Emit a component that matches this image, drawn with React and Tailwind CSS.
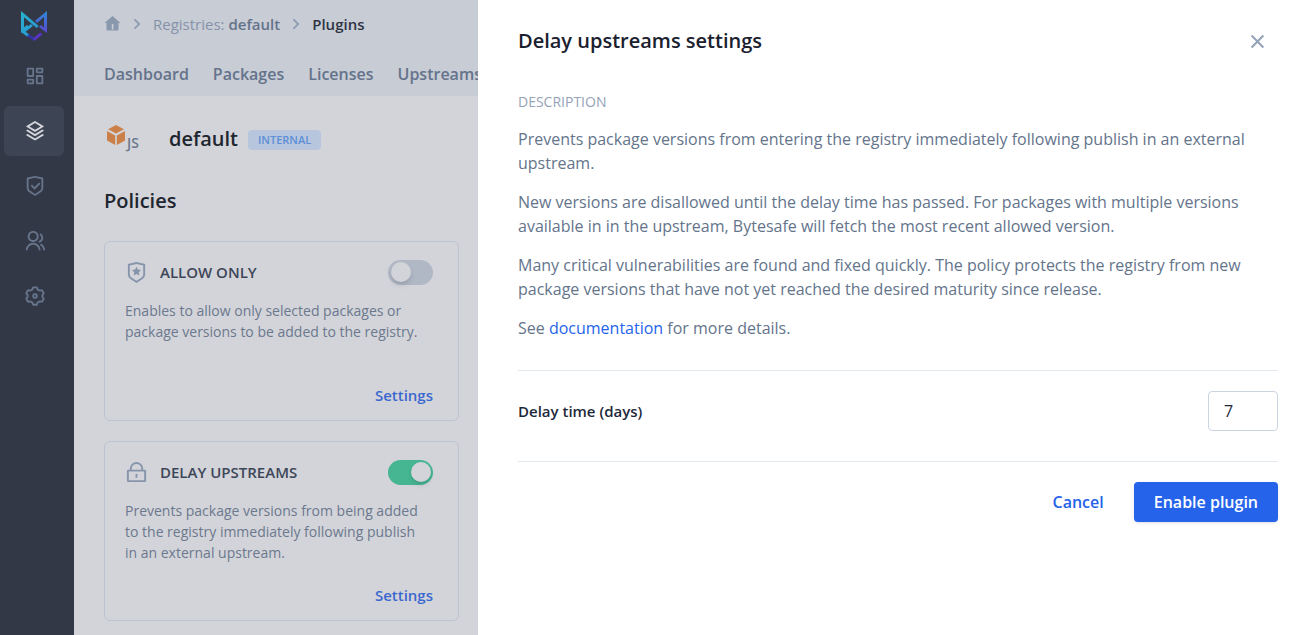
import React, { useState } from 'react';
import {
  RiDashboardLine,
  RiStackLine,
  RiShieldCheckLine,
  RiGroupLine,
  RiShieldStarLine,
  RiCloseLine,
  RiArrowRightSLine,
} from 'react-icons/ri';

const tabs = ['Dashboard', 'Packages', 'Licenses', 'Upstreams'];

function GearIcon({ className }) {
  return (
    <svg className={className} viewBox="0 0 24 24" fill="none" stroke="currentColor" strokeWidth="2" strokeLinejoin="round">
      <path d="M9.2 4.8L10 2.5H14L14.8 4.8L17.2 6.2L19.6 5.7L21.6 9.2L20 11V13L21.6 14.8L19.6 18.3L17.2 17.8L14.8 19.2L14 21.5H10L9.2 19.2L6.8 17.8L4.4 18.3L2.4 14.8L4 13V11L2.4 9.2L4.4 5.7L6.8 6.2Z" />
      <circle cx="12" cy="12" r="2" />
    </svg>
  );
}

function LockIcon({ className }) {
  return (
    <svg className={className} viewBox="0 0 24 24" fill="none" stroke="currentColor" strokeWidth="2">
      <rect x="3" y="10" width="18" height="11" rx="0.5" />
      <path d="M6 10V8A6 6 0 0 1 18 8V10" />
      <path d="M12 13.5V17.5" />
    </svg>
  );
}

const navItems = [
  { label: 'Dashboard', icon: RiDashboardLine },
  { label: 'Registries', icon: RiStackLine, active: true },
  { label: 'Security', icon: RiShieldCheckLine },
  { label: 'Users', icon: RiGroupLine },
  { label: 'Settings', icon: GearIcon },
];

const policies = [
  {
    id: 'allow-only',
    title: 'ALLOW ONLY',
    icon: RiShieldStarLine,
    text: 'Enables to allow only selected packages or package versions to be added to the registry.',
    enabled: false,
  },
  {
    id: 'delay-upstreams',
    title: 'DELAY UPSTREAMS',
    icon: LockIcon,
    text: 'Prevents package versions from being added to the registry immediately following publish in an external upstream.',
    enabled: true,
  },
];

function Logo() {
  return (
    <svg className="w-7 h-8" viewBox="0 0 28 32" fill="none">
      <defs>
        <linearGradient id="logo-left" x1="0" y1="0" x2="1" y2="1">
          <stop offset="0" stopColor="#27b4cf" />
          <stop offset="1" stopColor="#2a93cf" />
        </linearGradient>
        <linearGradient id="logo-right" x1="0" y1="0" x2="0" y2="1">
          <stop offset="0" stopColor="#2f8ad6" />
          <stop offset="1" stopColor="#5b46cf" />
        </linearGradient>
      </defs>
      {/* right ear */}
      <path d="M27 1V23L19 17L21 15L24 17.5V7L17 13L15 10.8Z" fill="url(#logo-right)" />
      {/* left ear and the band that crosses it */}
      <path d="M1 1L18.8 16L16.6 18L4 7.2V17.3L7 15L9.2 17L1 23Z" fill="url(#logo-left)" />
      {/* chin */}
      <path d="M10.8 14L13 16L5.6 21.8L9.8 25L7.6 27L1 22Z" fill="#2a9fd2" />
      <path d="M9.2 24.2L14 27.6V31L6.8 26Z" fill="#3435a8" />
      <path d="M14 27.6L20.2 22.6L22.6 24.4L14 31Z" fill="#5a35c4" />
    </svg>
  );
}

function Sidebar() {
  return (
    <nav className="w-[74px] shrink-0 bg-[#333847] flex flex-col px-1 pt-2.5">
      <a href="#home" aria-label="Home" className="w-[60px] flex justify-center mb-[9px]">
        <Logo />
      </a>
      <div className="flex flex-col gap-[5px]">
        {navItems.map(({ label, icon: Icon, active }) => (
          <a
            key={label}
            href={`#${label.toLowerCase()}`}
            aria-label={label}
            className={`w-[60px] h-[50px] pl-0.5 rounded-md flex items-center justify-center ${
              active ? 'bg-[#3d4554] text-[#d4d6dc]' : 'text-[#66758c]'
            }`}
          >
            <Icon className="w-[22px] h-[22px]" />
          </a>
        ))}
      </div>
    </nav>
  );
}

function Header() {
  return (
    <header className="h-24 bg-[#c8ccd5] px-[30px] pt-3">
      <div className="flex items-center h-6 text-[15px] whitespace-nowrap">
        <a href="#home" aria-label="Home" className="text-[#8a98ae]">
          <svg className="w-[17px] h-[17px]" viewBox="0 0 17 17" fill="currentColor">
            <path fillRule="evenodd" d="M8.5 0L16.5 7H14.5V13.5Q14.5 14.5 13.5 14.5H3.5Q2.5 14.5 2.5 13.5V7H.5ZM7.8 8V13.5H9.4V8Z" />
          </svg>
        </a>
        <RiArrowRightSLine className="w-5 h-5 mx-1.5 text-[#8a98ae]" />
        <a href="#registries" className="text-[#8593aa]">
          Registries: <span className="font-semibold text-[#64738b]">default</span>
        </a>
        <RiArrowRightSLine className="w-5 h-5 mx-1.5 text-[#8a98ae]" />
        <span className="font-semibold text-[#2e3444]">Plugins</span>
      </div>
      <div className="flex gap-6 mt-[26px] text-base leading-6 font-semibold text-[#64738b]">
        {tabs.map((tab) => (
          <a key={tab} href={`#${tab.toLowerCase()}`}>{tab}</a>
        ))}
      </div>
    </header>
  );
}

function PolicyCard({ policy }) {
  const [enabled, setEnabled] = useState(policy.enabled);
  const Icon = policy.icon;

  return (
    <section className="w-[355px] h-[180px] rounded-md border border-[#bcc3d1] pl-5 pr-[25px] pt-[18px] pb-[13px] flex flex-col">
      <div className="flex items-center">
        <Icon className="w-[23px] h-[23px] text-[#8795ac]" />
        <h3 className="ml-3 text-[15px] leading-[23px] font-semibold text-[#3d4658]">{policy.title}</h3>
        <label className="ml-auto relative w-[45px] h-[25px] cursor-pointer">
          <input
            type="checkbox"
            aria-label={policy.title}
            checked={enabled}
            onChange={(e) => setEnabled(e.target.checked)}
            className="peer appearance-none block w-full h-full rounded-full bg-[#b0b7c5] checked:bg-[#45b592] cursor-pointer"
          />
          <span className="absolute top-0.5 left-[3px] w-5 h-5 rounded-full bg-[#d3d4d9] shadow-md pointer-events-none peer-checked:translate-x-5" />
        </label>
      </div>
      <p className="mt-[15px] pr-2.5 text-sm leading-[21px] text-[#6b788e]">{policy.text}</p>
      <a href={`#${policy.id}`} className="mt-auto self-end text-[15px] leading-6 font-semibold text-[#3b68cf]">
        Settings
      </a>
    </section>
  );
}

function Registry() {
  return (
    <main className="px-[30px] pt-[30px]">
      <div className="flex items-center h-[26px]">
        <div className="flex w-[65px] text-[#6b788e]">
          <svg className="w-6 h-6" viewBox="0 0 24 24" fill="#cb8049">
            <path d="M12 0L20 4.2L12 8.6L4 4.2Z" />
            <path d="M3 6L11.2 10.4V20L3 15.6Z" />
            <path d="M21 6L12.8 10.4V20L21 15.6Z" />
          </svg>
          <span className="-ml-px pt-2 text-sm leading-5 font-semibold">JS</span>
        </div>
        <h1 className="text-xl font-semibold text-[#20252f]">default</h1>
        <span className="mt-0.5 ml-2.5 h-5 px-2.5 rounded bg-[#b7c6dd] text-[11px] leading-5 font-semibold text-[#5c8fd8]">INTERNAL</span>
      </div>
      <h2 className="mt-[34px] text-xl leading-[30px] font-semibold text-[#20252f]">Policies</h2>
      <div className="mt-[25px] flex flex-col gap-5">
        {policies.map((policy) => (
          <PolicyCard key={policy.id} policy={policy} />
        ))}
      </div>
    </main>
  );
}

function SettingsDrawer() {
  const [days, setDays] = useState('7');

  return (
    <aside role="dialog" aria-labelledby="drawer-title" className="fixed inset-y-0 right-0 w-[830px] max-w-full bg-white pl-10 pr-[30px] pt-[25px]">
      <div className="flex items-center justify-between">
        <h2 id="drawer-title" className="text-xl leading-8 font-semibold text-[#1a202e]">Delay upstreams settings</h2>
        <button type="button" aria-label="Close" className="mr-2 text-[#94a3b8]">
          <RiCloseLine className="w-[25px] h-[25px]" />
        </button>
      </div>

      <h3 className="mt-[35px] text-sm leading-5 text-[#94a3b8]">DESCRIPTION</h3>
      <div className="mt-[15px] flex flex-col gap-[15px] text-base leading-6 text-[#64748b]">
        <p>
          Prevents package versions from entering the registry immediately following publish in an external upstream.
        </p>
        <p>
          New versions are disallowed until the delay time has passed. For packages with multiple versions
          available in in the upstream, Bytesafe will fetch the most recent allowed version.
        </p>
        <p>
          Many critical vulnerabilities are found and fixed quickly. The policy protects the registry from new
          package versions that have not yet reached the desired maturity since release.
        </p>
        <p>
          See <a href="#documentation" className="text-[#2563eb]">documentation</a> for more details.
        </p>
      </div>

      <form onSubmit={(e) => e.preventDefault()}>
        <div className="mt-[30px] pt-5 pb-[30px] border-y border-[#e2e8f0] flex items-center justify-between">
          <label htmlFor="delay" className="text-[15px] font-semibold text-[#1e293b]">Delay time (days)</label>
          <input
            id="delay"
            type="text"
            inputMode="numeric"
            value={days}
            onChange={(e) => setDays(e.target.value)}
            className="w-[70px] h-10 px-[15px] rounded border border-[#cbd5e1] text-base text-[#1e293b]"
          />
        </div>
        <div className="mt-5 flex justify-end gap-[30px] text-base font-semibold">
          <button type="button" className="text-[#2563eb]">Cancel</button>
          <button type="submit" className="h-10 px-5 rounded bg-[#2563eb] text-white shadow-sm">Enable plugin</button>
        </div>
      </form>
    </aside>
  );
}

function App() {
  return (
    <div className="h-screen overflow-hidden flex bg-[#d3d4d9] font-['Open_Sans',sans-serif]">
      <Sidebar />
      <div className="flex-1 min-w-0">
        <Header />
        <Registry />
      </div>
      <SettingsDrawer />
    </div>
  );
}

export default App;
